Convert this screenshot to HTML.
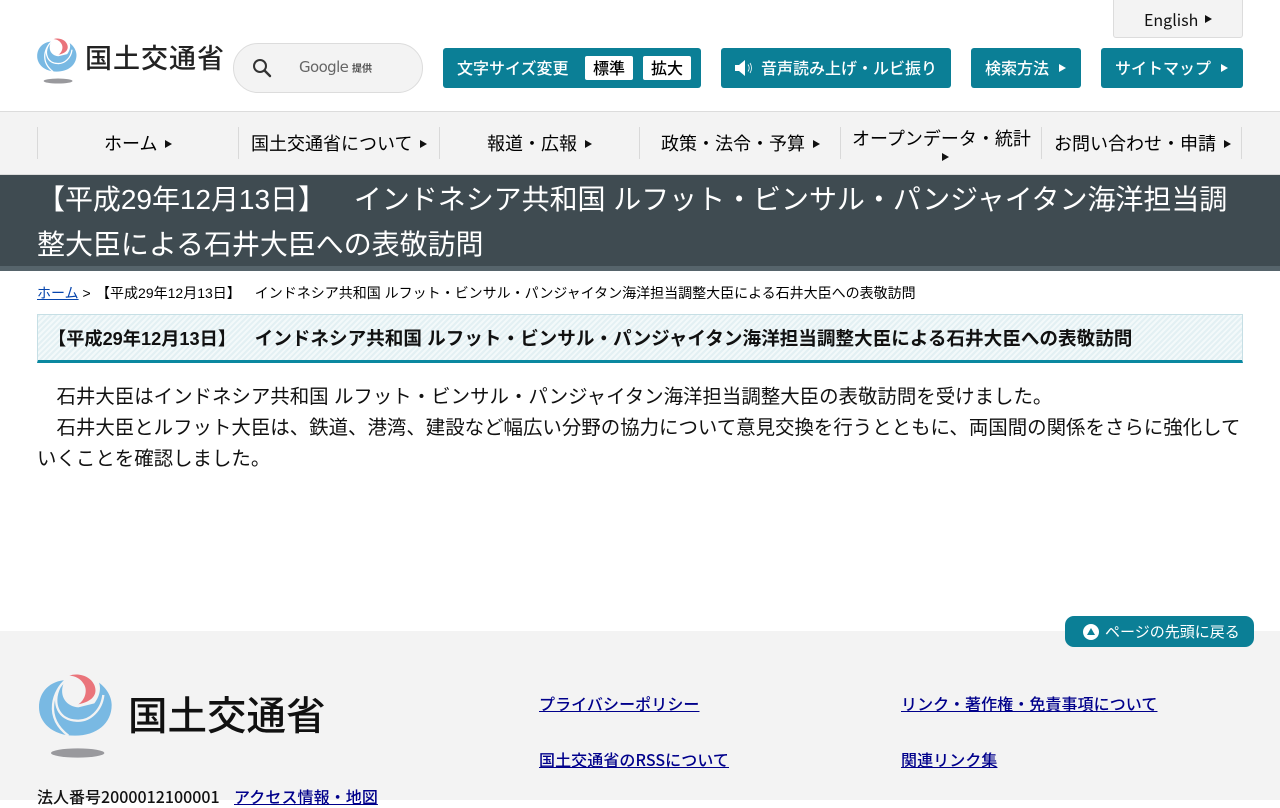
<!DOCTYPE html>
<html lang="ja"><head><meta charset="utf-8"><title>国土交通省</title>
<style>
html,body{margin:0;padding:0}
body{width:1280px;height:800px;overflow:hidden;position:relative;background:#fff;color:#000;font-family:"Liberation Sans","Noto Sans CJK JP",sans-serif;text-spacing-trim:space-all}
.a{position:absolute;white-space:nowrap}
.n{font-family:"Noto Sans CJK JP",sans-serif}
.btn{position:absolute;top:48px;height:40px;background:#0b7f96;border-radius:3px;color:#fff;font:500 16px/38px "Noto Sans CJK JP",sans-serif;white-space:nowrap}
.btn span{position:absolute;top:0}
.w{position:absolute;top:8px;width:48px;height:24px;background:#fff;border-radius:2px;color:#000;text-align:center;font:500 16px/23px "Noto Sans CJK JP",sans-serif}
.tri{position:absolute;width:0;height:0;border-style:solid;border-color:transparent;border-width:4px 0 4px 7px}
.nav{position:absolute;top:127px;height:32px;border-left:1px solid #d9d9d9}
.nt{position:absolute;font:400 18px/26px "Noto Sans CJK JP",sans-serif;white-space:nowrap;color:#000}
.f{position:absolute;font:500 16px/24px "Noto Sans CJK JP",sans-serif;color:#00008b;text-decoration:underline;white-space:nowrap;letter-spacing:.08px}
.logo{font-family:"Noto Sans CJK JP",sans-serif;color:#222;white-space:nowrap;position:absolute}
</style></head><body>

<svg class="a" style="left:35px;top:36px" width="46" height="50" viewBox="0 0 255 276">
<path fill="#79b9e3" d="M95 30C45 32 12 65 12 112C12 155 50 197 120 197C185 197 230 160 230 105C230 80 215 55 192 38C200 60 190 85 178 100L130 112C95 110 72 80 85 42Z"/>
<path fill="none" stroke="#fff" stroke-width="7" d="M95 28C55 60 25 140 100 197"/>
<path fill="none" stroke="#fff" stroke-width="7" d="M73 52C50 100 70 150 125 152C165 155 200 120 205 75"/>
<path fill="#ea747b" d="M103 17C125 8 165 15 178 45C190 75 170 95 130 103C150 90 160 60 145 40C135 25 120 18 103 17Z"/>
<ellipse cx="128" cy="249" rx="80" ry="14" fill="#99999d"/>
</svg>
<div class="logo" style="left:85px;top:38px;font-size:27px;line-height:38px;letter-spacing:1px;font-weight:500">国土交通省</div>

<div class="a" style="left:233px;top:43px;width:188px;height:48px;background:#f3f3f3;border:1px solid #dcdcdc;border-radius:25px"></div>
<svg class="a" style="left:251px;top:57px" width="22" height="22" viewBox="0 0 22 22" fill="none" stroke="#333" stroke-width="2"><circle cx="9" cy="9" r="6"/><path d="M13.500 13.500L19 19" stroke-linecap="round" stroke-width="2.400"/></svg>
<div class="a" style="left:299px;top:57px;font:15px/20px 'DejaVu Sans',sans-serif;letter-spacing:-.6px;color:#666">Google</div>
<div class="a n" style="left:352px;top:60px;font-size:10px;line-height:15px;color:#555;font-weight:700">提供</div>

<div class="a" style="left:1113px;top:-4px;width:128px;height:40px;background:#f3f3f3;border:1px solid #dcdcdc;border-radius:3px"></div>
<div class="a n" style="left:1144px;top:7px;font-size:16px;line-height:24px;color:#111">English</div>
<div class="tri" style="left:1205px;top:15px;border-left-color:#111"></div>

<div class="btn" style="left:443px;width:258px"><span style="left:14px">文字サイズ変更</span><div class="w" style="left:142px">標準</div><div class="w" style="left:200px">拡大</div></div>
<div class="btn" style="left:721px;width:230px">
<svg style="position:absolute;left:13px;top:12px" width="20" height="16" viewBox="0 0 20 16"><path fill="#fff" d="M1 5h4l6-5v16l-6-5H1z"/><path fill="none" stroke="#fff" stroke-width=".8" d="M14 4.500c1.500 2.200 1.500 4.800 0 7M16 3c2 3 2 7 0 10"/></svg>
<span style="left:40px">音声読み上げ・ルビ振り</span></div>
<div class="btn" style="left:971px;width:110px"><span style="left:14px">検索方法</span><div class="tri" style="left:88px;top:16px;border-left-color:#fff"></div></div>
<div class="btn" style="left:1101px;width:142px"><span style="left:14px">サイトマップ</span><div class="tri" style="left:120px;top:16px;border-left-color:#fff"></div></div>

<div class="a" style="left:0;top:111px;width:1280px;height:62px;background:#f3f3f3;border-top:1px solid #dcdcdc;border-bottom:1px solid #dcdcdc"></div>
<div class="nav" style="left:37px"></div><div class="nav" style="left:238px"></div><div class="nav" style="left:439px"></div><div class="nav" style="left:639px"></div><div class="nav" style="left:840px"></div><div class="nav" style="left:1041px"></div><div class="nav" style="left:1241px"></div>
<div class="nt" style="left:104px;top:130px">ホーム</div><div class="tri" style="left:165px;top:140px;border-left-color:#111"></div>
<div class="nt" style="left:251px;top:130px">国土交通省について</div><div class="tri" style="left:420px;top:140px;border-left-color:#111"></div>
<div class="nt" style="left:487px;top:130px">報道・広報</div><div class="tri" style="left:585px;top:140px;border-left-color:#111"></div>
<div class="nt" style="left:661px;top:130px">政策・法令・予算</div><div class="tri" style="left:813px;top:140px;border-left-color:#111"></div>
<div class="nt" style="left:852px;top:125px">オープンデータ・統計</div><div class="tri" style="left:942px;top:153px;border-left-color:#111"></div>
<div class="nt" style="left:1054px;top:130px">お問い合わせ・申請</div><div class="tri" style="left:1224px;top:140px;border-left-color:#111"></div>

<div class="a" style="left:0;top:175px;width:1280px;height:91px;background:#3f4b51;border-bottom:5px solid #56646b"></div>
<div class="a" style="left:37px;top:177px;font-size:28px;line-height:45px;color:#fff;letter-spacing:-.04px">【平成29年12月13日】　インドネシア共和国 ルフット・ビンサル・パンジャイタン海洋担当調<br>整大臣による石井大臣への表敬訪問</div>

<div class="a" style="left:37px;top:284px;font-size:14px;line-height:18px"><span style="color:#0645ad;text-decoration:underline">ホーム</span><span style="margin-right:1.500px"> &gt;</span> 【平成29年12月13日】　インドネシア共和国 ルフット・ビンサル・パンジャイタン海洋担当調整大臣による石井大臣への表敬訪問</div>

<div class="a" style="left:37px;top:314px;width:1204px;height:45px;border:1px solid #c6dfe5;border-bottom:3px solid #0a88a0;background:repeating-linear-gradient(135deg,#e3f0f3 0 2px,#f3f9fa 2px 4px)"></div>
<div class="a" style="left:48px;top:326px;font-size:18.6px;line-height:26px;font-weight:700;color:#111"><span style="font-size:18.2px">【平成29年12月13日】</span>　インドネシア共和国 ルフット・ビンサル・パンジャイタン海洋担当調整大臣による石井大臣への表敬訪問</div>

<div class="a" style="left:37px;top:382px;font-size:19.45px;line-height:31px;color:#111">　石井大臣はインドネシア共和国 ルフット・ビンサル・パンジャイタン海洋担当調整大臣の表敬訪問を受けました。<br>　石井大臣とルフット大臣は、鉄道、港湾、建設など幅広い分野の協力について意見交換を行うとともに、両国間の関係をさらに強化して<br>いくことを確認しました。</div>

<div class="a" style="left:0;top:631px;width:1280px;height:169px;background:#f3f3f3"></div>
<div class="a" style="left:1065px;top:616px;width:189px;height:31px;background:#0b7f96;border-radius:9px"></div>
<div class="a" style="left:1083px;top:624px;width:16px;height:16px;background:#fff;border-radius:50%"></div>
<div class="a" style="left:1087px;top:628px;width:0;height:0;border-left:4px solid transparent;border-right:4px solid transparent;border-bottom:7px solid #0b7f96"></div>
<div class="a n" style="left:1105px;top:620px;font-size:15px;line-height:24px;color:#fff">ページの先頭に戻る</div>

<svg class="a" style="left:35px;top:670px" width="85" height="92" viewBox="0 0 255 276">
<path fill="#79b9e3" d="M95 30C45 32 12 65 12 112C12 155 50 197 120 197C185 197 230 160 230 105C230 80 215 55 192 38C200 60 190 85 178 100L130 112C95 110 72 80 85 42Z"/>
<path fill="none" stroke="#f3f3f3" stroke-width="7" d="M95 28C55 60 25 140 100 197"/>
<path fill="none" stroke="#f3f3f3" stroke-width="7" d="M73 52C50 100 70 150 125 152C165 155 200 120 205 75"/>
<path fill="#ea747b" d="M103 17C125 8 165 15 178 45C190 75 170 95 130 103C150 90 160 60 145 40C135 25 120 18 103 17Z"/>
<ellipse cx="128" cy="249" rx="80" ry="14" fill="#99999d"/>
</svg>
<div class="logo" style="left:128px;top:685px;font-size:39.5px;line-height:58px;font-weight:500;color:#111">国土交通省</div>

<div class="a n" style="left:37px;top:784px;font-size:16px;line-height:24px;font-weight:500;color:#111">法人番号2000012100001</div>
<div class="f" style="left:234px;top:784px">アクセス情報・地図</div>
<div class="f" style="left:539px;top:691px">プライバシーポリシー</div>
<div class="f" style="left:539px;top:747px">国土交通省のRSSについて</div>
<div class="f" style="left:901px;top:691px">リンク・著作権・免責事項について</div>
<div class="f" style="left:901px;top:747px">関連リンク集</div>
</body></html>
